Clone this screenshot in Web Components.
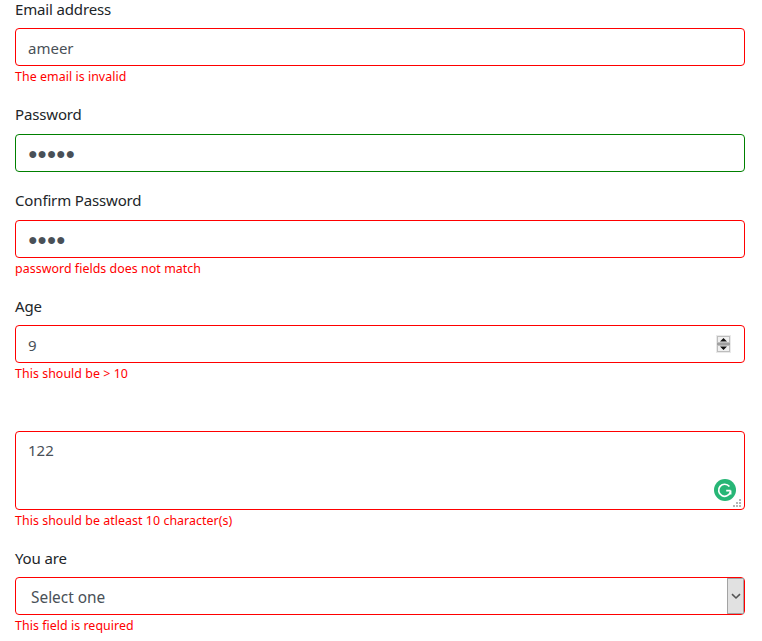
<!DOCTYPE html>
<html>
<head>
<meta charset="utf-8">
<style>
  html, body { margin: 0; background: #fff; overflow: hidden; height: 641px; }
</style>
</head>
<body>
<signup-form>
  <form-field label="Email address" error="The email is invalid"><text-box state="bad">ameer</text-box></form-field>
  <form-field label="Password"><text-box state="good" dots>●●●●●</text-box></form-field>
  <form-field label="Confirm Password" error="password fields does not match"><text-box state="bad" dots>●●●●</text-box></form-field>
  <form-field label="Age" error="This should be &gt; 10"><text-box state="bad" spinner>9</text-box></form-field>
  <form-field label="" error="This should be atleast 10 character(s)"><text-box state="bad" multiline>122</text-box></form-field>
  <form-field label="You are" error="This field is required"><text-box state="bad" select>Select one</text-box></form-field>
</signup-form>

<script>
const FONT = `"Noto Sans", "Open Sans", sans-serif`;

class SignupForm extends HTMLElement {
  constructor() {
    super();
    this.attachShadow({ mode: 'open' }).innerHTML = `
      <style>
        :host { display: block; margin: -4px 17px 0 15px; font-family: ${FONT}; }
      </style>
      <slot></slot>`;
  }
}

class FormField extends HTMLElement {
  constructor() {
    super();
    const shadow = this.attachShadow({ mode: 'open' });
    shadow.innerHTML = `
      <style>
        :host { display: block; margin-bottom: 16px; }
        .label { box-sizing: border-box; height: 24px; margin-bottom: 8px; padding-top: 0.6px; font-size: 15px; letter-spacing: -0.15px; line-height: 25px; color: #212529; white-space: nowrap; }
        .error { height: 19.5px; font-size: 12.4px; letter-spacing: 0.05px; line-height: 22px; color: #f00; white-space: nowrap; }
      </style>
      <div class="label"></div>
      <slot></slot>
      <div class="error"></div>`;
    shadow.querySelector('.label').textContent = this.getAttribute('label');
    const error = shadow.querySelector('.error');
    if (this.hasAttribute('error')) error.textContent = this.getAttribute('error');
    else error.remove();
  }
}

class TextBox extends HTMLElement {
  constructor() {
    super();
    let extra = '';
    if (this.hasAttribute('spinner')) {
      extra = `<svg class="spin" width="15" height="18" viewBox="0 0 15 18">
        <rect width="15" height="18" fill="#e9e9e9"/>
        <rect x="1.5" y="1.5" width="12" height="6" fill="#f0f0f0" stroke="#bdbdbd"/>
        <rect x="1.5" y="10.5" width="12" height="6" fill="#f0f0f0" stroke="#bdbdbd"/>
        <rect x="1" y="8" width="13" height="2" fill="#a0a0a0"/>
        <path d="M7.5 3 L11 6.5 H4 Z M4 11.5 H11 L7.5 15 Z" fill="#111"/>
      </svg>`;
    } else if (this.hasAttribute('multiline')) {
      extra = `<svg class="grammarly" width="22" height="22" viewBox="0 0 22 22">
        <circle cx="11" cy="11" r="11" fill="#27b676"/>
        <path d="M15.4 7.6 A6 6 0 1 0 16.4 13 M16.6 11.6 H12.2 M16.6 11.6 V15.4" fill="none" stroke="#fff" stroke-width="1.7"/>
      </svg>
      <svg class="grip" width="9" height="9" viewBox="0 0 9 9" fill="#b5b5b5">
        <rect x="6" y="0" width="2" height="2"/>
        <rect x="3" y="3" width="2" height="2"/><rect x="6" y="3" width="2" height="2"/>
        <rect x="0" y="6" width="2" height="2"/><rect x="3" y="6" width="2" height="2"/><rect x="6" y="6" width="2" height="2"/>
      </svg>`;
    } else if (this.hasAttribute('select')) {
      extra = `<div class="arrow"><svg width="10" height="7" viewBox="0 0 10 7"><path d="M1 1.2 L5 5 L9 1.2" fill="none" stroke="#555" stroke-width="1.6"/></svg></div>`;
    }
    this.attachShadow({ mode: 'open' }).innerHTML = `
      <style>
        :host { display: flex; align-items: center; position: relative; box-sizing: border-box; height: 38px; padding: 2px 12px 0; border: 1px solid #ced4da; border-radius: 4px; background: #fff; font-size: 15px; color: #495057; }
        :host([state="bad"]) { border-color: #f00; }
        :host([state="good"]) { border-color: green; }
        :host([dots]) { font-size: 16px; letter-spacing: -0.3px; padding-top: 0; }
        :host([multiline]) { height: 79px; align-items: flex-start; padding-top: 6px; line-height: 24px; }
        :host([select]) { padding-left: 15px; font-size: 15.4px; }
        .spin { position: absolute; right: 13px; top: 9px; }
        .grammarly { position: absolute; right: 8px; top: 47px; }
        .grip { position: absolute; right: 2px; bottom: 1px; }
        .arrow { position: absolute; right: 0; top: 0; bottom: 0; width: 15px; display: flex; align-items: center; justify-content: center; background: #e1e1e1; border: 1px solid #a3a3a3; box-sizing: content-box; }
      </style>
      <slot></slot>${extra}`;
  }
}

customElements.define('signup-form', SignupForm);
customElements.define('form-field', FormField);
customElements.define('text-box', TextBox);
</script>
</body>
</html>
